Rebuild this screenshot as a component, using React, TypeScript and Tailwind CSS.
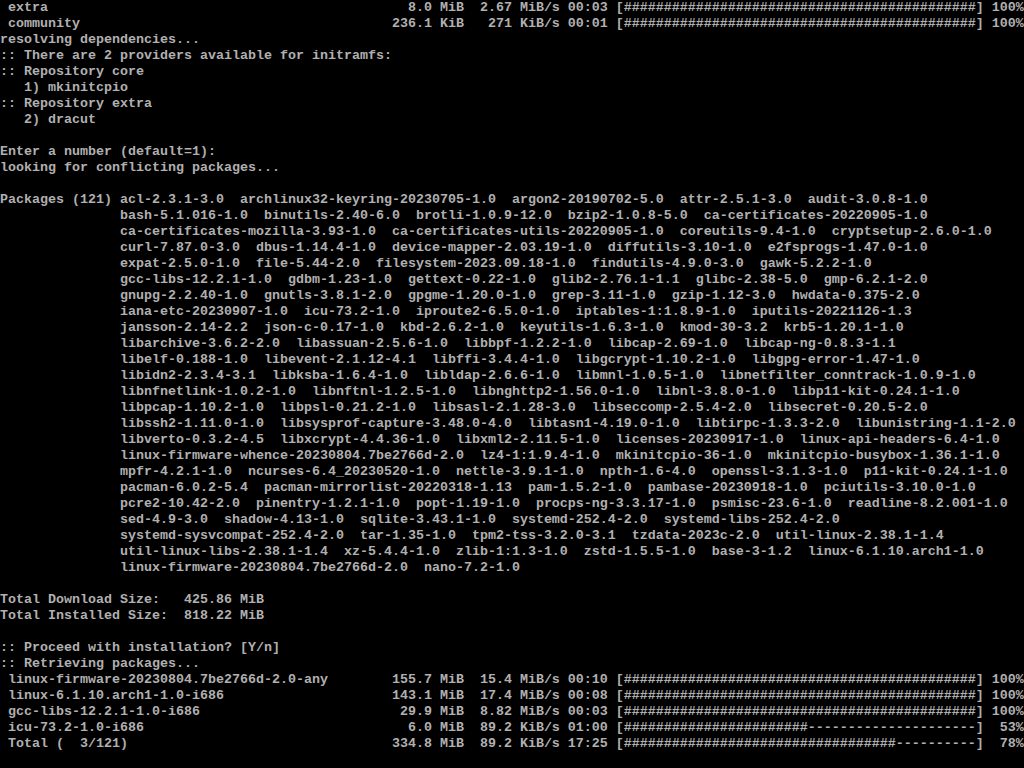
import React from "react";

function prog(name: string, size: string, rate: string, unit: string, time: string, hashes: number, pct: string) {
  const left = (" " + name).padEnd(48, " ");
  const bar = "#".repeat(hashes) + "-".repeat(44 - hashes);
  return left + size.padStart(10, " ") + rate.padStart(6, " ") + " " + unit + " " + time + " [" + bar + "] " + pct.padStart(4, " ");
}

const pad = "               ";

const lines: string[] = [
  prog("extra", "8.0 MiB", "2.67", "MiB/s", "00:03", 44, "100%"),
  prog("community", "236.1 KiB", "271", "KiB/s", "00:01", 44, "100%"),
  "resolving dependencies...",
  ":: There are 2 providers available for initramfs:",
  ":: Repository core",
  "   1) mkinitcpio",
  ":: Repository extra",
  "   2) dracut",
  "",
  "Enter a number (default=1):",
  "looking for conflicting packages...",
  "",
  "Packages (121) acl-2.3.1-3.0  archlinux32-keyring-20230705-1.0  argon2-20190702-5.0  attr-2.5.1-3.0  audit-3.0.8-1.0",
  pad + "bash-5.1.016-1.0  binutils-2.40-6.0  brotli-1.0.9-12.0  bzip2-1.0.8-5.0  ca-certificates-20220905-1.0",
  pad + "ca-certificates-mozilla-3.93-1.0  ca-certificates-utils-20220905-1.0  coreutils-9.4-1.0  cryptsetup-2.6.0-1.0",
  pad + "curl-7.87.0-3.0  dbus-1.14.4-1.0  device-mapper-2.03.19-1.0  diffutils-3.10-1.0  e2fsprogs-1.47.0-1.0",
  pad + "expat-2.5.0-1.0  file-5.44-2.0  filesystem-2023.09.18-1.0  findutils-4.9.0-3.0  gawk-5.2.2-1.0",
  pad + "gcc-libs-12.2.1-1.0  gdbm-1.23-1.0  gettext-0.22-1.0  glib2-2.76.1-1.1  glibc-2.38-5.0  gmp-6.2.1-2.0",
  pad + "gnupg-2.2.40-1.0  gnutls-3.8.1-2.0  gpgme-1.20.0-1.0  grep-3.11-1.0  gzip-1.12-3.0  hwdata-0.375-2.0",
  pad + "iana-etc-20230907-1.0  icu-73.2-1.0  iproute2-6.5.0-1.0  iptables-1:1.8.9-1.0  iputils-20221126-1.3",
  pad + "jansson-2.14-2.2  json-c-0.17-1.0  kbd-2.6.2-1.0  keyutils-1.6.3-1.0  kmod-30-3.2  krb5-1.20.1-1.0",
  pad + "libarchive-3.6.2-2.0  libassuan-2.5.6-1.0  libbpf-1.2.2-1.0  libcap-2.69-1.0  libcap-ng-0.8.3-1.1",
  pad + "libelf-0.188-1.0  libevent-2.1.12-4.1  libffi-3.4.4-1.0  libgcrypt-1.10.2-1.0  libgpg-error-1.47-1.0",
  pad + "libidn2-2.3.4-3.1  libksba-1.6.4-1.0  libldap-2.6.6-1.0  libmnl-1.0.5-1.0  libnetfilter_conntrack-1.0.9-1.0",
  pad + "libnfnetlink-1.0.2-1.0  libnftnl-1.2.5-1.0  libnghttp2-1.56.0-1.0  libnl-3.8.0-1.0  libp11-kit-0.24.1-1.0",
  pad + "libpcap-1.10.2-1.0  libpsl-0.21.2-1.0  libsasl-2.1.28-3.0  libseccomp-2.5.4-2.0  libsecret-0.20.5-2.0",
  pad + "libssh2-1.11.0-1.0  libsysprof-capture-3.48.0-4.0  libtasn1-4.19.0-1.0  libtirpc-1.3.3-2.0  libunistring-1.1-2.0",
  pad + "libverto-0.3.2-4.5  libxcrypt-4.4.36-1.0  libxml2-2.11.5-1.0  licenses-20230917-1.0  linux-api-headers-6.4-1.0",
  pad + "linux-firmware-whence-20230804.7be2766d-2.0  lz4-1:1.9.4-1.0  mkinitcpio-36-1.0  mkinitcpio-busybox-1.36.1-1.0",
  pad + "mpfr-4.2.1-1.0  ncurses-6.4_20230520-1.0  nettle-3.9.1-1.0  npth-1.6-4.0  openssl-3.1.3-1.0  p11-kit-0.24.1-1.0",
  pad + "pacman-6.0.2-5.4  pacman-mirrorlist-20220318-1.13  pam-1.5.2-1.0  pambase-20230918-1.0  pciutils-3.10.0-1.0",
  pad + "pcre2-10.42-2.0  pinentry-1.2.1-1.0  popt-1.19-1.0  procps-ng-3.3.17-1.0  psmisc-23.6-1.0  readline-8.2.001-1.0",
  pad + "sed-4.9-3.0  shadow-4.13-1.0  sqlite-3.43.1-1.0  systemd-252.4-2.0  systemd-libs-252.4-2.0",
  pad + "systemd-sysvcompat-252.4-2.0  tar-1.35-1.0  tpm2-tss-3.2.0-3.1  tzdata-2023c-2.0  util-linux-2.38.1-1.4",
  pad + "util-linux-libs-2.38.1-1.4  xz-5.4.4-1.0  zlib-1:1.3-1.0  zstd-1.5.5-1.0  base-3-1.2  linux-6.1.10.arch1-1.0",
  pad + "linux-firmware-20230804.7be2766d-2.0  nano-7.2-1.0",
  "",
  "Total Download Size:   425.86 MiB",
  "Total Installed Size:  818.22 MiB",
  "",
  ":: Proceed with installation? [Y/n]",
  ":: Retrieving packages...",
  prog("linux-firmware-20230804.7be2766d-2.0-any", "155.7 MiB", "15.4", "MiB/s", "00:10", 44, "100%"),
  prog("linux-6.1.10.arch1-1.0-i686", "143.1 MiB", "17.4", "MiB/s", "00:08", 44, "100%"),
  prog("gcc-libs-12.2.1-1.0-i686", "29.9 MiB", "8.82", "MiB/s", "00:03", 44, "100%"),
  prog("icu-73.2-1.0-i686", "6.0 MiB", "89.2", "KiB/s", "01:00", 23, "53%"),
  prog("Total (  3/121)", "334.8 MiB", "89.2", "KiB/s", "17:25", 34, "78%"),
  "",
];

export default function App() {
  return (
    <div className="w-[1024px] h-[768px] overflow-hidden bg-black text-[#b0b0b0] font-['Liberation_Mono',monospace] font-bold text-[13.333px] leading-[16px]">
      {lines.map((l, i) => (
        <div key={i} className="h-4 whitespace-pre">
          {l || " "}
        </div>
      ))}
    </div>
  );
}
